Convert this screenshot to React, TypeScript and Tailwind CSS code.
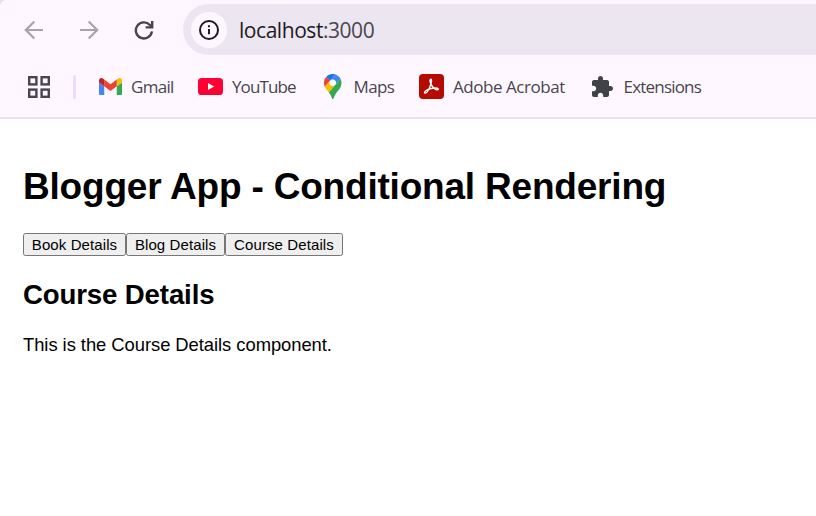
import React, { useState } from 'react';

const uiFont = "font-['Open_Sans','Noto_Sans',sans-serif]";

function Arrow({ flip }: { flip?: boolean }) {
  return (
    <svg width="20" height="20" viewBox="0 0 20 20" fill="none" stroke="#a8a2ab" strokeWidth="2.2" className={flip ? 'rotate-180' : ''}>
      <path d="M19 10H2.2M10.3 1.5 1.8 10l8.5 8.5" />
    </svg>
  );
}

function Reload() {
  return (
    <svg width="20" height="20" viewBox="0 0 20 20" fill="none" stroke="#4a4153" strokeWidth="2.4">
      <path d="M17.9 11.4A8.05 8.05 0 1 1 15.9 5L17.6 6.9" />
      <path d="M18.2 1v6.4H11.6" />
    </svg>
  );
}

function Info() {
  return (
    <svg width="22" height="22" viewBox="0 0 22 22" fill="none" stroke="#1d1b20">
      <circle cx="11" cy="11" r="9" strokeWidth="2" />
      <path d="M11 10v5.2M11 6.2v2" strokeWidth="2" />
    </svg>
  );
}

function AppsGrid() {
  return (
    <svg width="22" height="22" viewBox="0 0 22 22" fill="none" stroke="#49454e" strokeWidth="2.4">
      <rect x="1.2" y="1.2" width="7.2" height="7.2" />
      <rect x="13.6" y="1.2" width="7.2" height="7.2" />
      <rect x="1.2" y="13.6" width="7.2" height="7.2" />
      <rect x="13.6" y="13.6" width="7.2" height="7.2" />
    </svg>
  );
}

function Gmail() {
  return (
    <svg width="23" height="17.25" viewBox="52 42 88 66">
      <path fill="#4285f4" d="M58 108h14V74L52 59v43c0 3.32 2.69 6 6 6" />
      <path fill="#34a853" d="M120 108h14c3.32 0 6-2.69 6-6V59l-20 15" />
      <path fill="#fbbc04" d="M120 48v26l20-15v-8c0-7.42-8.47-11.65-14.4-7.2" />
      <path fill="#ea4335" d="M72 74V48l24 18 24-18v26L96 92" />
      <path fill="#c5221f" d="M52 51v8l20 15V48l-5.6-4.2c-5.94-4.45-14.4-.22-14.4 7.2" />
    </svg>
  );
}

function YouTube() {
  return (
    <svg width="25" height="17" viewBox="0 0 25 17">
      <rect width="25" height="17" rx="3.6" fill="#ff0033" />
      <path d="M10 5v7l6.2-3.5z" fill="#fff" />
    </svg>
  );
}

function MapsPin() {
  return (
    <svg width="17.5" height="25" viewBox="0 0 92.3 132.3">
      <circle cx="46" cy="46" r="20" fill="#fff" />
      <path fill="#1a73e8" d="M60.2 2.2C55.8.8 51 0 46.1 0 32 0 19.3 6.4 10.8 16.5l21.8 18.3L60.2 2.2z" />
      <path fill="#ea4335" d="M10.8 16.5C4.1 24.5 0 34.9 0 46.1c0 8.7 1.7 15.7 4.6 22l28-33.3-21.8-18.3z" />
      <path fill="#4285f4" d="M46.2 28.5c9.8 0 17.7 7.9 17.7 17.7 0 4.3-1.6 8.3-4.2 11.4 0 0 13.9-16.6 27.5-32.7-5.6-10.8-15.3-19-27-22.7L32.6 34.8c3.3-3.8 8.1-6.3 13.6-6.3" />
      <path fill="#fbbc04" d="M46.2 63.8c-9.8 0-17.7-7.9-17.7-17.7 0-4.3 1.5-8.3 4.1-11.3l-28 33.3c4.8 10.6 12.8 19.2 21 29.9l34.1-40.5c-3.3 3.9-8.1 6.3-13.5 6.3" />
      <path fill="#34a853" d="M59.1 109.2c15.4-24.1 33.3-35 33.3-63 0-7.7-1.9-14.9-5.2-21.3L25.6 98c2.6 3.4 5.3 7.3 7.9 11.3 9.4 14.5 6.8 23.1 12.8 23.1s3.4-8.7 12.8-23.2" />
    </svg>
  );
}

function Acrobat() {
  return (
    <svg width="25" height="25" viewBox="0 0 25 25">
      <rect width="25" height="25" rx="4" fill="#b30b00" />
      <path
        d="M11.9 5.3c-1.4 0-1 2.9.3 5.4 1.5 2.7 3.7 4.700 5.600 5.100 1.700.4 2.200-1.200.3-1.600-3-.6-7.200.4-10.100 1.800-2.500 1.300-3 2.900-2 3.100 1.500.3 3.900-3.500 5.300-7.300 1.200-3.100 1.700-6.500.6-6.500z"
        fill="none"
        stroke="#fff"
        strokeWidth="1.400"
        strokeLinejoin="round"
      />
    </svg>
  );
}

function Puzzle() {
  return (
    <svg width="24" height="24" viewBox="0 0 24 24" fill="#3f4246">
      <path d="M20.5 11H19V7c0-1.1-.9-2-2-2h-4V3.5C13 2.12 11.88 1 10.5 1S8 2.12 8 3.5V5H4c-1.1 0-1.99.9-1.99 2v3.8H3.5c1.49 0 2.7 1.21 2.7 2.7s-1.21 2.7-2.7 2.7H2V20c0 1.1.9 2 2 2h3.8v-1.5c0-1.49 1.21-2.7 2.7-2.7 1.49 0 2.7 1.21 2.7 2.7V22H17c1.1 0 2-.9 2-2v-4h1.5c1.38 0 2.5-1.12 2.5-2.5S21.88 11 20.5 11z" />
    </svg>
  );
}

function Bookmark({ icon, label, width, text }: { icon: React.ReactNode; label: string; width: string; text: string }) {
  return (
    <div className={`flex h-[26px] shrink-0 items-center ${width}`}>
      {icon}
      <span className={`whitespace-nowrap ${text}`}>{label}</span>
    </div>
  );
}

function BrowserChrome() {
  return (
    <header className={`h-[119px] overflow-hidden border-b-2 border-[#e8e0ea] bg-[#e4dcf6] ${uiFont}`}>
      <div className="h-[117px] rounded-tl-[6px] bg-[#fef7ff]">
        <div className="flex h-[60px] items-center pl-[23.5px]">
          <div className="flex w-[159.5px] gap-[35px]">
            <Arrow />
            <Arrow flip />
            <Reload />
          </div>
          <div className="-mt-px flex h-[51px] flex-1 items-center rounded-l-full bg-[#ece6f0] pl-2">
            <div className="flex size-9 items-center justify-center rounded-full bg-[#fef7ff]">
              <Info />
            </div>
            <div className="ml-3 text-[21px] leading-6 tracking-[-0.45px] text-[#1d1b20]">
              localhost<span className="text-[#49454e]">:3000</span>
            </div>
          </div>
        </div>
        <div className="flex h-[53px] items-center pl-7 text-[17px] leading-6 text-[#49454e]">
          <AppsGrid />
          <div className="ml-[23px] mr-[23px] h-6 w-[3px] rounded-full bg-[#eaddff]" />
          <Bookmark icon={<Gmail />} label="Gmail" width="w-[99px]" text="ml-[9px] tracking-[-0.7px]" />
          <Bookmark icon={<YouTube />} label="YouTube" width="w-[126px]" text="ml-[9px] tracking-[-0.9px]" />
          <Bookmark icon={<MapsPin />} label="Maps" width="w-[95px]" text="ml-3 tracking-[-0.6px]" />
          <Bookmark icon={<Acrobat />} label="Adobe Acrobat" width="w-[171px]" text="ml-[9px] tracking-[-0.45px]" />
          <Bookmark icon={<Puzzle />} label="Extensions" width="w-[120px]" text="ml-[9.5px] tracking-[-0.8px]" />
        </div>
      </div>
    </header>
  );
}

const views = ['Book Details', 'Blog Details', 'Course Details'];
const buttonWidths = ['w-[103px]', 'w-[99px]', 'w-[118px]'];

export default function App() {
  const [view, setView] = useState('Course Details');
  return (
    <div className="h-[516px] overflow-hidden bg-white">
      <BrowserChrome />
      <main className="px-[23px] pt-[46px] font-['Liberation_Sans',Arial,sans-serif] text-black">
        <h1 className="whitespace-nowrap text-[37px] font-bold leading-[44px] tracking-[-0.2px]">Blogger App - Conditional Rendering</h1>
        <div className="mt-6 flex">
          {views.map((name, i) => (
            <button
              key={name}
              onClick={() => setView(name)}
              className={`h-[23px] whitespace-nowrap rounded-[2.5px] border border-[#767676] bg-[#efefef] text-[15px] leading-[21px] tracking-[0.1px] ${buttonWidths[i]}`}
            >
              {name}
            </button>
          ))}
        </div>
        <h2 className="mt-[23px] text-[27.6px] font-bold leading-8 tracking-[-0.13px]">{view}</h2>
        <p className="mt-[23px] text-[18.4px] leading-[21px] tracking-[-0.05px]">This is the {view} component.</p>
      </main>
    </div>
  );
}
